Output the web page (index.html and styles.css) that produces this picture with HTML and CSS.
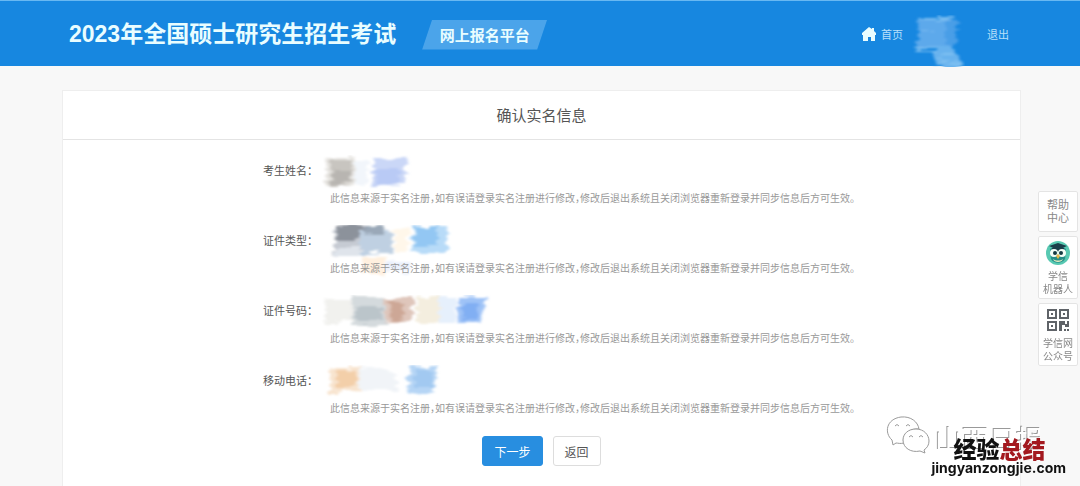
FILE: index.html
```html
<!DOCTYPE html>
<html lang="zh-CN">

<head>
  <meta charset="UTF-8">
  <meta name="viewport" content="width=device-width, initial-scale=1.0">
  <title>确认实名信息</title>
  <link rel="stylesheet" href="styles.css">
</head>

<body>
  <svg class="defs" width="0" height="0" aria-hidden="true">
    <filter id="brush" x="-10%" y="-20%" width="120%" height="140%">
      <feTurbulence type="fractalNoise" baseFrequency="0.05 0.25" numOctaves="3" seed="4" result="noise"/>
      <feDisplacementMap in="SourceGraphic" in2="noise" scale="11" xChannelSelector="R" yChannelSelector="G" result="rough"/>
      <feGaussianBlur in="rough" stdDeviation="1.8 0.8"/>
    </filter>
  </svg>

  <header class="header">
    <div class="header-inner">
      <h1 class="title">2023年全国硕士研究生招生考试</h1>
      <span class="platform">网上报名平台</span>
      <nav class="nav">
        <a href="#" class="home">
          <svg width="14" height="14" viewBox="0 0 14 14"><path fill="#e9fdff" d="M7 0 0 6v2h1v6h5v-4h3v4h4V8h1V6l-2-2V1h-2v1z"/></svg>
          首页
        </a>
        <svg class="user" width="56" height="52" viewBox="0 0 56 52">
          <g filter="url(#brush)">
            <path fill="#5da9eb" d="M8 3h36v28H8z"/>
            <path fill="#489ee7" d="M36 6h12v22H36z"/>
            <path fill="#68b2ee" d="M6 31h38v4H6zM26 35h20l8 18H26z"/>
            <path stroke="#93cdf5" stroke-width="1" d="M8 4h34M10 17h14M8 34h20M28 39h16M28 45h20M30 50h24"/>
          </g>
        </svg>
        <a href="#">退出</a>
      </nav>
    </div>
  </header>

  <main class="card">
    <h2 class="card-title">确认实名信息</h2>
    <dl class="info">
      <div class="row">
        <dt>考生姓名：</dt>
        <dd class="value">
          <svg width="180" height="34" viewBox="0 0 180 34">
            <g filter="url(#brush)">
              <path fill="#e6e4e0" d="M5 3h30v27H5z"/>
              <path fill="#c8c5c0" d="M9 4h23l-2 24-20 5z"/>
              <path fill="#b8b5b1" d="M12 15h18v13H12z"/>
              <path fill="#f2f6fb" d="M34 6h14v22H34z"/>
              <path fill="#cad7f7" d="M53 3h33v27H53z"/>
              <path fill="#b9caf5" d="M56 14h24v15H56z"/>
            </g>
          </svg>
        </dd>
        <dd class="hint">此信息来源于实名注册，如有误请登录实名注册进行修改，修改后退出系统且关闭浏览器重新登录并同步信息后方可生效。</dd>
      </div>
      <div class="row">
        <dt>证件类型：</dt>
        <dd class="value">
          <svg width="180" height="56" viewBox="0 0 180 56">
            <g filter="url(#brush)">
              <path fill="#c6cbd3" d="M14 3h34v25H14z"/>
              <path fill="#8c929b" d="M16 1h30l2 10-32 6z"/>
              <path fill="#bfd0e2" d="M40 4h32v24H40z"/>
              <path fill="#9aa8b8" d="M44 1h22v8H44z"/>
              <path fill="#dfe4eb" d="M15 23h26v8H15z"/>
              <path fill="#fff7ea" d="M74 4h15v23H74z"/>
              <path fill="#b8dbf8" d="M93 2h35v26H93z"/>
              <path fill="#93c7f3" d="M95 2h22v18H95z"/>
              <path fill="#fff0df" d="M42 32h22v18H42z"/>
              <path fill="#eaf0fc" d="M65 37h26v9H65z"/>
            </g>
          </svg>
        </dd>
        <dd class="hint">此信息来源于实名注册，如有误请登录实名注册进行修改，修改后退出系统且关闭浏览器重新登录并同步信息后方可生效。</dd>
      </div>
      <div class="row">
        <dt>证件号码：</dt>
        <dd class="value">
          <svg width="180" height="34" viewBox="0 0 180 34">
            <g filter="url(#brush)">
              <path fill="#f1f1ee" d="M4 4h32v23H4z"/>
              <path fill="#d4dadd" d="M32 2h34v28H32z"/>
              <path fill="#bbc5ca" d="M35 12h28v14H35z"/>
              <path fill="#dfc6bb" d="M65 3h28v24H65z"/>
              <path fill="#cda796" d="M70 7h14v18H70z"/>
              <path fill="#f4eedf" d="M97 2h24v26H97z"/>
              <path fill="#e6f0fc" d="M119 2h17v26h-17z"/>
              <path fill="#9fc3f7" d="M138 2h28l-6 26h-22z"/>
              <path fill="#81aff3" d="M142 9h16v14h-16z"/>
            </g>
          </svg>
        </dd>
        <dd class="hint">此信息来源于实名注册，如有误请登录实名注册进行修改，修改后退出系统且关闭浏览器重新登录并同步信息后方可生效。</dd>
      </div>
      <div class="row">
        <dt>移动电话：</dt>
        <dd class="value">
          <svg width="180" height="34" viewBox="0 0 180 34">
            <g filter="url(#brush)">
              <path fill="#f8e4cf" d="M9 3h30v24H9z"/>
              <path fill="#f3cfa9" d="M16 5h20v17H16z"/>
              <path fill="#f1f4f8" d="M39 3h32l8 22H39z"/>
              <path fill="#b6d5f5" d="M89 2h28l-4 25-24 5z"/>
              <path fill="#a2c9f1" d="M95 6h17v15H95z"/>
            </g>
          </svg>
        </dd>
        <dd class="hint">此信息来源于实名注册，如有误请登录实名注册进行修改，修改后退出系统且关闭浏览器重新登录并同步信息后方可生效。</dd>
      </div>
    </dl>
    <div class="actions">
      <button type="button" class="btn btn-primary">下一步</button>
      <button type="button" class="btn">返回</button>
    </div>
  </main>

  <aside class="sidebar">
    <a href="#" class="side-item side-help">帮助<br>中心</a>
    <a href="#" class="side-item">
      <svg width="26" height="26" viewBox="0 0 26 26">
        <circle cx="13" cy="13" r="12" fill="#58c9b2"/>
        <path fill="#268e88" d="M5 10c1-5 15-5 16 0l-1 9c-3 5-11 5-14 0z"/>
        <path fill="#193e4a" d="m4 6 9-3 9 3-9 4zM7 8h12v3H7z"/>
        <circle cx="9" cy="13" r="4" fill="#f5fff9"/>
        <circle cx="17" cy="13" r="4" fill="#f5fff9"/>
        <circle cx="10" cy="13" r="2" fill="#153b43"/>
        <circle cx="16" cy="13" r="2" fill="#153b43"/>
        <path fill="#e7b94b" d="m11 16 2-2 2 2-2 3z"/>
        <path fill="#e7edc1" d="M8 19c3 2 7 2 10 0-1 4-9 4-10 0z"/>
      </svg>
      学信<br>机器人
    </a>
    <a href="#" class="side-item">
      <svg width="26" height="26" viewBox="0 0 26 26">
        <g fill="none" stroke="#5f6368" stroke-width="2">
          <path d="M3 3h8v8H3zM15 3h8v8h-8zM3 15h8v8H3z"/>
        </g>
        <path fill="#5f6368" d="M6 6h2v2H6zM18 6h2v2h-2zM6 18h2v2H6zM14 14h6v3h2v-3h2v6h-4v-2h-3v6h-3zM19 22h2v2h-2zM22 22h2v2h-2z"/>
      </svg>
      学信网<br>公众号
    </a>
  </aside>

  <div class="watermark">
    <div class="account">
      <svg width="44" height="38" viewBox="0 0 44 38">
        <g fill="#fff" stroke="#9a9a9a" stroke-width="1">
          <path d="M7 29l-1-5C-2 17 0 3 15 1c10-1 17 5 18 12-10-1-18 7-15 14-4 1-6 0-8 0z"/>
          <path d="M30 13c8 0 13 6 13 12 0 4-2 7-5 9l1 3-5-2c-9 2-17-3-17-11 0-6 5-11 13-11z"/>
          <path fill="none" d="M9 10q2-3 4 0M20 10q2-3 4 0M23 21q2-3 4 0M33 21q2-3 4 0"/>
        </g>
      </svg>
      <span>山西日报</span>
    </div>
    <div class="site">
      <div class="site-name">经验<b>总结</b></div>
      <div class="site-url">jingyanzongjie.com</div>
    </div>
  </div>
</body>

</html>
```
FILE: styles.css
```css
* {
  box-sizing: border-box;
}

body {
  font-family: "Noto Sans CJK SC", "Liberation Sans", sans-serif;
  background-color: #f8f8f8;
  margin: 0;
  min-height: 100vh;
  display: flex;
  flex-direction: column;
  color: #555;
}

a {
  color: inherit;
  text-decoration: none;
}

.defs {
  position: absolute;
}

.header {
  height: 66px;
  background-color: #1787e0;
  border-top: 1px solid #68b8f2;
  color: #e9fdff;
}

.header-inner {
  display: flex;
  align-items: center;
  height: 65px;
  padding: 0 71px 0 69px;
}

.title {
  margin: 0;
  font-family: "Liberation Sans", "Noto Sans CJK SC", sans-serif;
  font-size: 23px;
  line-height: 32px;
  font-weight: bold;
}

.platform {
  width: 125px;
  margin-left: 26px;
  margin-top: 2px;
  font-size: 15px;
  line-height: 30px;
  font-weight: bold;
  text-align: center;
  background-color: #4ba4ea;
  clip-path: polygon(10px 0, 100% 0, 115px 100%, 0 100%);
}

.nav {
  display: flex;
  align-items: center;
  margin-left: auto;
  font-size: 11px;
  color: #b9e0fa;
}

.home {
  display: flex;
  align-items: center;
  gap: 5px;
}

.user {
  margin: 14px 22px 0 6px;
}

.card {
  flex: 1;
  margin: 24px 59px 0 62px;
  background-color: #fff;
  border: 1px solid #eee;
  border-bottom: 0;
}

.card-title {
  margin: 0;
  font-size: 15px;
  line-height: 48px;
  font-weight: normal;
  text-align: center;
  border-bottom: 1px solid #e4e4e4;
}

.info {
  display: flex;
  flex-direction: column;
  gap: 20px;
  margin: 0;
  padding: 15px 0 20px 200px;
}

.row {
  display: grid;
  grid-template-columns: 67px 1fr;
  grid-template-rows: 30px 16px;
  row-gap: 5px;
  height: 50px;
}

.row dt {
  font-size: 11px;
  line-height: 30px;
}

.row dd {
  margin: 0;
}

.value svg {
  display: block;
  margin-left: -10px;
}

.row .hint {
  grid-column: 2;
  font-size: 10px;
  line-height: 16px;
  font-feature-settings: "halt";
  color: #999;
}

.actions {
  display: flex;
  justify-content: center;
  gap: 10px;
  padding-top: 1px;
}

.btn {
  height: 30px;
  padding: 0 11px;
  font-family: inherit;
  font-size: 12px;
  color: #555;
  background-color: #fff;
  border: 1px solid #ddd;
  border-radius: 3px;
  cursor: pointer;
}

.btn-primary {
  color: #fff;
  background-color: #288ee0;
  border-color: #288ee0;
}

.sidebar {
  position: fixed;
  top: 191px;
  right: 2px;
  width: 40px;
  display: flex;
  flex-direction: column;
  gap: 4px;
}

.side-item {
  padding: 3px 0;
  font-size: 10px;
  line-height: 13px;
  text-align: center;
  color: #888;
  background-color: #fff;
  border: 1px solid #e4e4e4;
  border-radius: 2px;
}

.side-item svg {
  display: block;
  margin: 0 auto 3px;
}

.side-help {
  padding: 6px 0 7px;
  font-size: 11px;
}

.watermark {
  position: fixed;
  right: 14px;
  bottom: 10px;
  width: 180px;
  height: 60px;
}

.account {
  display: flex;
  align-items: flex-start;
  gap: 5px;
  font-size: 27px;
  line-height: 38px;
  color: #fff;
  text-shadow: -1px -1px 0 #999;
}

.account span {
  padding-top: 4px;
}

.site {
  position: absolute;
  right: 0;
  bottom: 0;
}

.site-name {
  margin-left: 22px;
  font-size: 23px;
  line-height: 24px;
  font-weight: 900;
  color: #111;
}

.site-name b {
  font-weight: 900;
  color: #a3191f;
}

.site-url {
  font-family: Inter, sans-serif;
  font-size: 14px;
  line-height: 16px;
  font-weight: bold;
  color: #111;
}
```
